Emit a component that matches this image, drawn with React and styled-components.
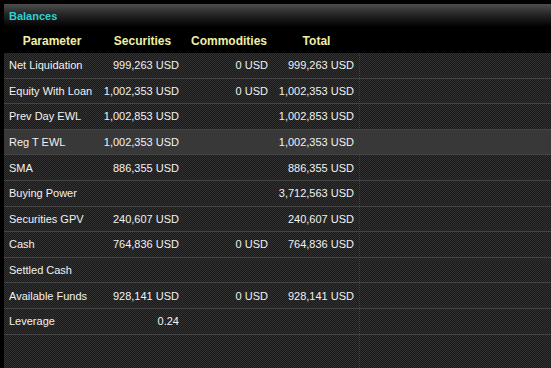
import React from "react";
import styled, { createGlobalStyle } from "styled-components";

const rows = [
  { name: "Net Liquidation", sec: "999,263 USD", com: "0 USD", total: "999,263 USD" },
  { name: "Equity With Loan", sec: "1,002,353 USD", com: "0 USD", total: "1,002,353 USD" },
  { name: "Prev Day EWL", sec: "1,002,853 USD", com: "", total: "1,002,853 USD" },
  { name: "Reg T EWL", sec: "1,002,353 USD", com: "", total: "1,002,353 USD", active: true },
  { name: "SMA", sec: "886,355 USD", com: "", total: "886,355 USD" },
  { name: "Buying Power", sec: "", com: "", total: "3,712,563 USD" },
  { name: "Securities GPV", sec: "240,607 USD", com: "", total: "240,607 USD" },
  { name: "Cash", sec: "764,836 USD", com: "0 USD", total: "764,836 USD" },
  { name: "Settled Cash", sec: "", com: "", total: "" },
  { name: "Available Funds", sec: "928,141 USD", com: "0 USD", total: "928,141 USD" },
  { name: "Leverage", sec: "0.24", com: "", total: "" },
];

const App = () => {
  return (
    <>
      <GlobalStyle />
      <Panel>
        <TitleBar>Balances</TitleBar>
        <HeaderRow>
          <HeadCell>Parameter</HeadCell>
          <HeadCell>Securities</HeadCell>
          <HeadCell>Commodities</HeadCell>
          <HeadCell>Total</HeadCell>
        </HeaderRow>
        <Body>
          {rows.map((r) => (
            <Row key={r.name} $active={r.active}>
              <NameCell>{r.name}</NameCell>
              <ValueCell $pad={6}>{r.sec}</ValueCell>
              <ValueCell $pad={5}>{r.com}</ValueCell>
              <ValueCell $pad={6}>{r.total}</ValueCell>
            </Row>
          ))}
        </Body>
      </Panel>
    </>
  );
};

const GlobalStyle = createGlobalStyle`
  html, body {
    margin: 0;
    padding: 0;
    background: #000;
  }
  * {
    box-sizing: border-box;
  }
`;

const Panel = styled.div`
  width: 551px;
  height: 368px;
  background: #000;
  border-left: 4px solid #000;
  display: flex;
  flex-direction: column;
  font-family: "Liberation Sans", Arial, sans-serif;
  overflow: hidden;
`;

const TitleBar = styled.div`
  margin-top: 4px;
  height: 23px;
  padding-left: 5px;
  display: flex;
  align-items: center;
  background: linear-gradient(to bottom, #4d4d4d 0%, #262626 45%, #000 100%);
  color: #2ed3d6;
  font-size: 11px;
  font-weight: bold;
`;

const columns = "96px 85px 88px 87px 1fr";

const HeaderRow = styled.div`
  display: grid;
  grid-template-columns: ${columns};
  height: 26px;
  align-items: center;
  background: #000;
`;

const HeadCell = styled.div`
  text-align: center;
  color: #efefa6;
  font-size: 12px;
  font-weight: bold;
  padding-top: 1px;
`;

const Body = styled.div`
  flex: 1;
  background:
    repeating-linear-gradient(to bottom, #484848 0 1px, transparent 1px 2px) 355px 0 / 1px 100% no-repeat,
    conic-gradient(#313131 25%, #1a1a1a 0 50%, #313131 0 75%, #1a1a1a 0) 0 0 / 2px 2px;
`;

const Row = styled.div`
  display: grid;
  grid-template-columns: ${columns};
  height: 25.6px;
  align-items: center;
  border-bottom: 1px solid #444;
  background: ${(props) => (props.$active ? "#383838" : "transparent")};
  color: #f2f2f2;
  font-size: 11px;
`;

const NameCell = styled.div`
  padding-left: 5px;
  white-space: nowrap;
`;

const ValueCell = styled.div`
  text-align: right;
  padding-right: ${(props) => props.$pad}px;
  white-space: nowrap;
`;

export default App;
